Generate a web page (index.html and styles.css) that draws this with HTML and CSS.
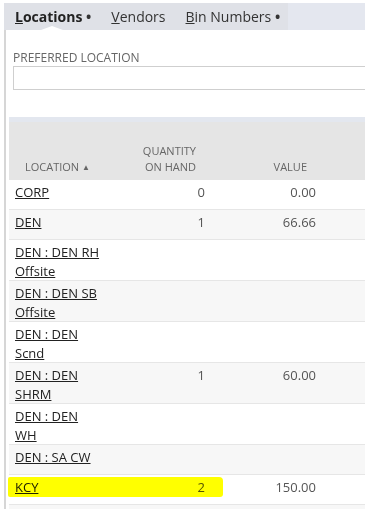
FILE: index.html
```html
<!DOCTYPE html>
<html lang="en">
  <head>
    <meta charset="UTF-8" />
    <meta name="viewport" content="width=device-width, initial-scale=1.0" />
    <title>Item Locations</title>
    <link rel="stylesheet" href="styles.css">
  </head>
  <body>
    <div class="tabs">
      <div class="tab-group">
        <span class="tab active"><u>L</u>ocations <span class="dot">&bull;</span></span>
        <span class="tab"><u>V</u>endors</span>
        <span class="tab"><u>B</u>in Numbers <span class="dot">&bull;</span></span>
      </div>
    </div>

    <div class="panel">
      <div class="field">
        <label for="pref">Preferred Location</label>
        <input type="text" id="pref">
      </div>

      <div class="list">
        <table>
          <colgroup>
            <col class="c-loc">
            <col class="c-qty">
            <col class="c-val">
            <col>
          </colgroup>
          <thead>
            <tr>
              <th class="left">Location <span class="sort">&#9650;</span></th>
              <th class="num">Quantity<br>On Hand</th>
              <th class="num">Value</th>
              <th></th>
            </tr>
          </thead>
          <tbody>
            <tr>
              <td><a href="#">CORP</a></td>
              <td class="num">0</td>
              <td class="num">0.00</td>
              <td></td>
            </tr>
            <tr>
              <td><a href="#">DEN</a></td>
              <td class="num">1</td>
              <td class="num">66.66</td>
              <td></td>
            </tr>
            <tr>
              <td><a href="#">DEN : DEN RH Offsite</a></td>
              <td></td><td></td><td></td>
            </tr>
            <tr>
              <td><a href="#">DEN : DEN SB Offsite</a></td>
              <td></td><td></td><td></td>
            </tr>
            <tr>
              <td><a href="#">DEN : DEN Scnd</a></td>
              <td></td><td></td><td></td>
            </tr>
            <tr>
              <td><a href="#">DEN : DEN SHRM</a></td>
              <td class="num">1</td>
              <td class="num">60.00</td>
              <td></td>
            </tr>
            <tr>
              <td><a href="#">DEN : DEN WH</a></td>
              <td></td><td></td><td></td>
            </tr>
            <tr>
              <td><a href="#">DEN : SA CW</a></td>
              <td></td><td></td><td></td>
            </tr>
            <tr>
              <td class="marked"><span class="highlight"></span><a href="#">KCY</a></td>
              <td class="num">2</td>
              <td class="num">150.00</td>
              <td></td>
            </tr>
            <tr>
              <td>&nbsp;</td><td></td><td></td><td></td>
            </tr>
          </tbody>
        </table>
      </div>
    </div>
  </body>
</html>
```

FILE: styles.css
```css
html, body {
  margin: 0;
  overflow: hidden;
}
body {
  font-family: "Open Sans", Arial, sans-serif;
  background: white;
  color: #333;
  width: 365px;
  height: 509px;
}
.tabs {
  margin: 3px 0 0 4px;
  height: 27px;
  background: #e4e7ef;
  display: flex;
}
.tab-group {
  width: 284px;
  background: #dfe1e7;
  display: flex;
  padding-left: 11px;
  box-sizing: border-box;
}
.tab {
  position: relative;
  font-size: 14px;
  line-height: 27px;
  color: #333;
  margin-right: 20px;
  white-space: nowrap;
}
.tab.active {
  font-weight: bold;
  color: #222;
}
.tab.active::after {
  content: "";
  position: absolute;
  left: 26px;
  bottom: 0;
  border-left: 11px solid transparent;
  border-right: 11px solid transparent;
  border-bottom: 4px solid white;
}
.dot {
  font-size: 14px;
  font-weight: bold;
  color: #333;
}
.panel {
  border-left: 2px solid #d6d6d6;
  margin-left: 4px;
  height: 480px;
  overflow: hidden;
}
.field {
  padding: 19px 0 0 7px;
}
.field label {
  display: block;
  font-size: 12px;
  text-transform: uppercase;
  color: #666;
  line-height: 17px;
}
.field input {
  display: block;
  width: 360px;
  height: 24px;
  box-sizing: border-box;
  border: 1px solid #cfcfcf;
  margin: 0;
}
.list {
  margin: 27px 0 0 3px;
  border-top: 5px solid #e3e7ef;
}
table {
  border-collapse: collapse;
  table-layout: fixed;
  width: 420px;
}
.c-loc { width: 97px; }
.c-qty { width: 105px; }
.c-val { width: 111px; }
th {
  background: #e5e5e5;
  height: 53px;
  vertical-align: bottom;
  font-size: 11px;
  font-weight: normal;
  text-transform: uppercase;
  color: #666;
  line-height: 16px;
  padding: 0 15px 5px 6px;
}
th.left {
  text-align: left;
  padding: 0 0 5px 16px;
  white-space: nowrap;
}
.sort { font-size: 8px; vertical-align: 1px; }
td {
  font-size: 13px;
  line-height: 18.5px;
  height: 26px;
  vertical-align: top;
  padding: 3px 6px 0;
  border-bottom: 1px solid #e6e6e6;
  color: #555;
}
tbody tr:nth-child(even) td { background: #f7f7f7; }
.num { text-align: right; }
td a {
  color: #222;
  text-decoration: underline;
}
.marked {
  position: relative;
}
.highlight {
  position: absolute;
  left: -1px;
  top: 2px;
  width: 215px;
  height: 20px;
  background: #ffff00;
  mix-blend-mode: multiply;
  border-radius: 2px 4px 3px 2px;
}
```
